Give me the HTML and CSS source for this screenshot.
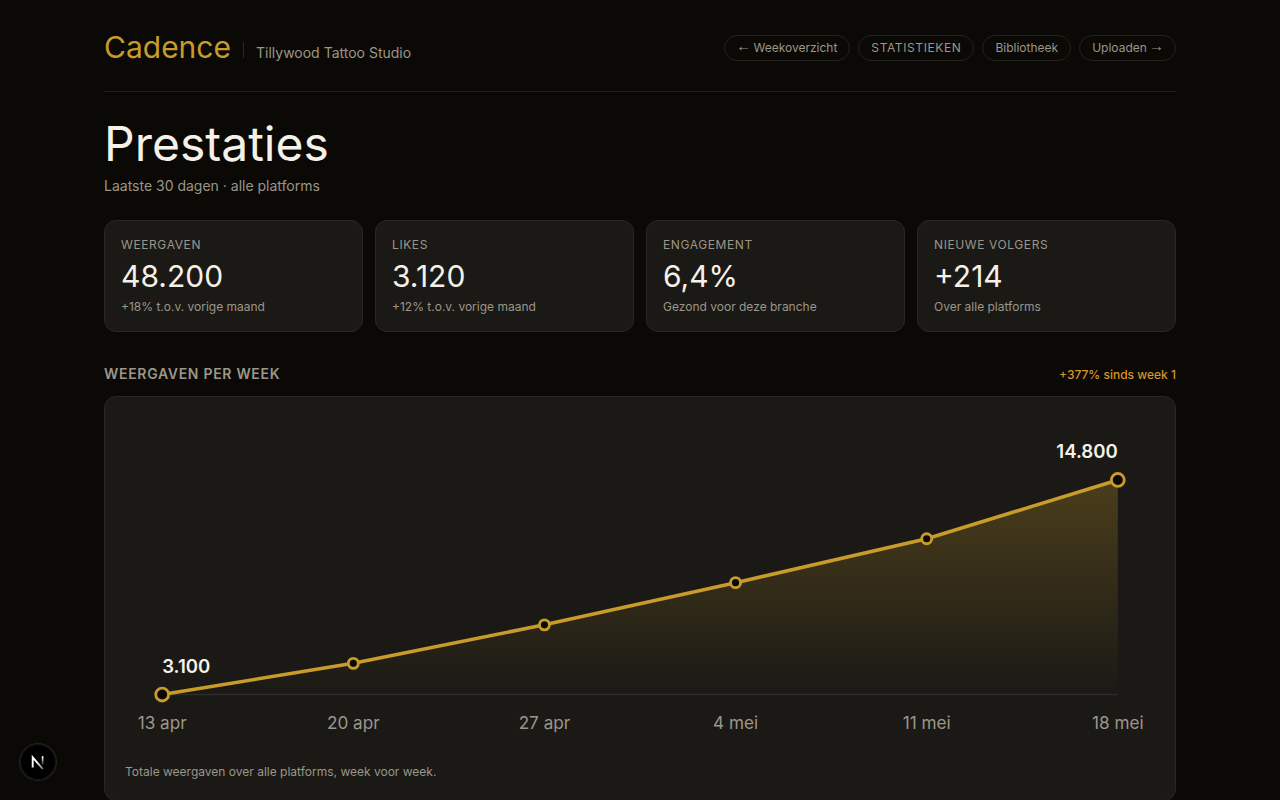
FILE: index.html
```html
<!DOCTYPE html>
<html lang="nl">
<head>
<meta charset="utf-8">
<title>Cadence</title>
<link rel="stylesheet" href="styles.css">
</head>
<body>
<main class="page">
  <header class="header">
    <div class="brand">
      <span class="logo">Cadence</span>
      <span class="divider"></span>
      <span class="studio">Tillywood Tattoo Studio</span>
    </div>
    <nav class="nav">
      <a class="pill"><span class="arrow">←</span> Weekoverzicht</a>
      <a class="pill current">Statistieken</a>
      <a class="pill">Bibliotheek</a>
      <a class="pill">Uploaden <span class="arrow">→</span></a>
    </nav>
  </header>
  <h1 class="title">Prestaties</h1>
  <p class="subtitle">Laatste 30 dagen · alle platforms</p>
  <section class="stats">
    <div class="card stat"><span class="label">Weergaven</span><span class="value">48.200</span><span class="note">+18% t.o.v. vorige maand</span></div>
    <div class="card stat"><span class="label">Likes</span><span class="value">3.120</span><span class="note">+12% t.o.v. vorige maand</span></div>
    <div class="card stat"><span class="label">Engagement</span><span class="value">6,4%</span><span class="note">Gezond voor deze branche</span></div>
    <div class="card stat"><span class="label">Nieuwe volgers</span><span class="value">+214</span><span class="note">Over alle platforms</span></div>
  </section>
  <div class="section-head">
    <h2 class="section-title">Weergaven per week</h2>
    <span class="growth">+377% sinds week 1</span>
  </div>
  <section class="card chart-card">
    <svg class="chart" viewBox="0 0 720 240">
      <defs>
        <linearGradient id="area" x1="0" y1="0" x2="0" y2="1">
          <stop offset="0" stop-color="#c89b2a" stop-opacity=".28"/>
          <stop offset="1" stop-color="#c89b2a" stop-opacity="0"/>
        </linearGradient>
      </defs>
      <line class="axis" x1="26" y1="194" x2="694" y2="194"/>
      <path fill="url(#area)" d="M26 194L159.6 172.2L293.2 145.3L426.8 115.8L560.4 85.1L694 44V194Z"/>
      <path class="line" d="M26 194L159.6 172.2L293.2 145.3L426.8 115.8L560.4 85.1L694 44"/>
      <g class="dots">
        <circle cx="26" cy="194" r="4.5"/>
        <circle cx="159.6" cy="172.2" r="3.5"/>
        <circle cx="293.2" cy="145.3" r="3.5"/>
        <circle cx="426.8" cy="115.8" r="3.5"/>
        <circle cx="560.4" cy="85.1" r="3.5"/>
        <circle cx="694" cy="44" r="4.5"/>
      </g>
      <text class="point" x="26" y="179">3.100</text>
      <text class="point end" x="694" y="29">14.800</text>
      <g class="ticks">
        <text x="26" y="218">13 apr</text>
        <text x="159.6" y="218">20 apr</text>
        <text x="293.2" y="218">27 apr</text>
        <text x="426.8" y="218">4 mei</text>
        <text x="560.4" y="218">11 mei</text>
        <text x="694" y="218">18 mei</text>
      </g>
    </svg>
    <p class="caption">Totale weergaven over alle platforms, week voor week.</p>
  </section>
</main>
<div class="dev-badge">
  <svg width="36" height="36" viewBox="0 0 36 36" fill="none">
    <defs>
      <linearGradient id="diag" x1="18" y1="18" x2="24" y2="25.5" gradientUnits="userSpaceOnUse"><stop stop-color="#fff"/><stop offset="1" stop-color="#fff" stop-opacity=".35"/></linearGradient>
      <linearGradient id="stem" x1="22" y1="13" x2="22" y2="22" gradientUnits="userSpaceOnUse"><stop stop-color="#fff"/><stop offset="1" stop-color="#fff" stop-opacity="0"/></linearGradient>
    </defs>
    <path d="M12.7 23.5V13.4L22.8 25" stroke="url(#diag)" stroke-width="1.9"/>
    <path d="M22.6 12.2V21" stroke="url(#stem)" stroke-width="1.7"/>
  </svg>
</div>
</body>
</html>
```
FILE: styles.css
```css
* { box-sizing: border-box; margin: 0; }
body {
  height: 800px;
  overflow: hidden;
  background: #0a0905;
  color: #f5f1e8;
  font-family: Inter, "Liberation Sans", sans-serif;
}
.page { width: 1072px; margin: 0 auto; padding-top: 28px; }
.header {
  display: flex;
  align-items: center;
  justify-content: space-between;
  height: 64px;
  padding-bottom: 24px;
  border-bottom: 1px solid #1f1d19;
}
.brand { display: flex; align-items: baseline; gap: 12px; padding-bottom: 2px; }
.logo { color: #c89b2a; font-size: 30px; line-height: 36px; }
.divider { width: 1px; height: 16px; background: #2a2824; }
.studio { color: #9c968a; font-size: 14px; line-height: 20px; }
.nav { display: flex; gap: 8px; }
.pill {
  height: 26px;
  border: 1px solid #24221e;
  border-radius: 999px;
  padding: 4px 12px;
  color: #9c968a;
  font-size: 12px;
  line-height: 16px;
  white-space: nowrap;
}
.arrow { margin: 0 -1.1px; font-family: "Liberation Sans", sans-serif; font-size: 15px; line-height: 0; vertical-align: 1px; }
.current { text-transform: uppercase; letter-spacing: 0.6px; }
.title { margin-top: 28px; font-size: 48px; font-weight: 400; line-height: 48px; }
.subtitle { margin-top: 8px; color: #9c968a; font-size: 14px; line-height: 20px; }
.card { background: #1a1915; border: 1px solid #2a2824; border-radius: 12px; }
.stats { display: grid; grid-template-columns: repeat(4, 1fr); gap: 12px; margin-top: 24px; }
.stat { display: flex; flex-direction: column; height: 112px; padding: 16px; }
.label { color: #9c968a; font-size: 12px; line-height: 16px; letter-spacing: 0.6px; text-transform: uppercase; }
.value { margin-top: 5px; font-size: 30px; line-height: 36px; }
.note { margin-top: 5px; color: #9c968a; font-size: 12px; line-height: 16px; }
.section-head { display: flex; align-items: baseline; justify-content: space-between; margin-top: 32px; }
.section-title { color: #9c968a; font-size: 14px; font-weight: 600; line-height: 20px; letter-spacing: 0.7px; text-transform: uppercase; }
.growth { color: #d4952a; font-size: 12px; font-weight: 500; line-height: 16px; }
.chart-card { margin-top: 12px; padding: 20px; }
.chart { display: block; width: 100%; overflow: visible; }
.axis { stroke: #2f2d29; stroke-width: 1; }
.line { fill: none; stroke: #c89b2a; stroke-width: 2.5; stroke-linejoin: round; stroke-linecap: round; }
.dots { fill: #0a0905; stroke: #c89b2a; stroke-width: 2; }
.point { fill: #f5f1e8; font-size: 13px; font-weight: 600; }
.end { text-anchor: end; }
.ticks { fill: #9c968a; font-size: 12px; text-anchor: middle; }
.caption { margin-top: 4px; color: #9c968a; font-size: 12px; line-height: 16px; }
.dev-badge {
  position: fixed;
  left: 20px;
  bottom: 20px;
  width: 36px;
  height: 36px;
  border-radius: 50%;
  background: #000;
  box-shadow: 0 0 0 1px #242422, inset 0 0 0 1px #171717;
}
```
